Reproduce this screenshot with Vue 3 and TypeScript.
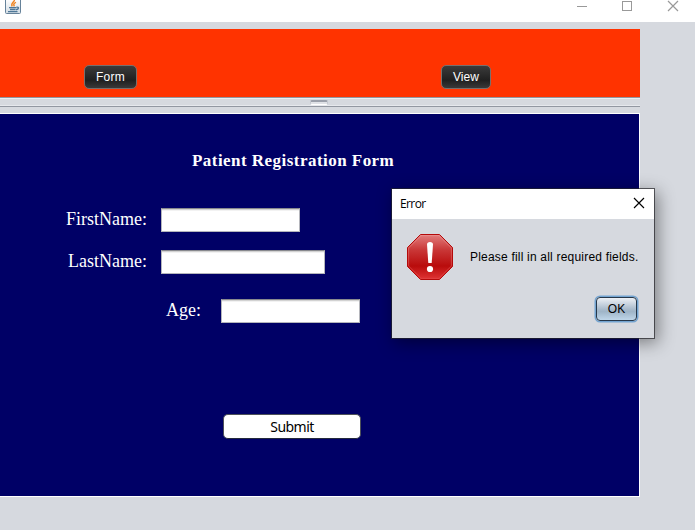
<script setup lang="ts">
import { ref } from 'vue'

interface Field {
  key: string
  label: string
}

const fields: Field[] = [
  { key: 'first', label: 'FirstName:' },
  { key: 'last', label: 'LastName:' },
  { key: 'age', label: 'Age:' },
]
const values = ref<Record<string, string>>({ first: '', last: '', age: '' })
const errorOpen = ref(true)

function submit() {
  errorOpen.value = fields.some((f) => !values.value[f.key])
}
</script>

<template>
  <div class="window">
    <header class="titlebar">
      <svg class="java" width="16" height="16" viewBox="0 0 16 16">
        <defs>
          <linearGradient id="javaBg" x1="0" y1="0" x2="0" y2="1">
            <stop offset="0" stop-color="#ffffff" />
            <stop offset="1" stop-color="#d3dde5" />
          </linearGradient>
        </defs>
        <path d="M0.5 0v13.5q0 1 1 1h13q1 0 1-1V0z" fill="url(#javaBg)" />
        <path d="M0.5 0v13.5q0 1 1 1h13q1 0 1-1V0" fill="none" stroke="#66829a" />
        <path d="M9.3 1C10 2.8 5.2 3.8 7.2 7.3M11 3.4C8.4 4.4 8.4 5.6 9.4 7.4" fill="none" stroke="#ee8524" stroke-width="1.5" />
        <path d="M4 8.6h7.2M5 10.5h5.6M3 12.6h9.5M11.4 8.2c3-.4 2.6 2-.4 2.5" fill="none" stroke="#4f7898" stroke-width="1.4" />
      </svg>
      <svg class="controls" width="104" height="14" viewBox="0 0 104 14" fill="none" stroke="#999">
        <path d="M0 6.5h10" />
        <rect x="45.5" y="1.5" width="9" height="9" />
        <path d="M91 1l10 10M101 1l-10 10" stroke-width="1.2" />
      </svg>
    </header>

    <main class="split">
      <nav class="top">
        <button class="dark form-btn">Form</button>
        <button class="dark view-btn">View</button>
      </nav>
      <div class="divider"><i class="grip"></i></div>
      <section class="panel">
        <h1>Patient Registration Form</h1>
        <form @submit.prevent="submit">
          <div v-for="f in fields" :key="f.key" class="row" :class="f.key">
            <label :for="f.key">{{ f.label }}</label>
            <input :id="f.key" v-model="values[f.key]" type="text" autocomplete="off" />
          </div>
          <button class="submit" type="submit">Submit</button>
        </form>
      </section>
    </main>

    <div v-if="errorOpen" class="dialog" role="alertdialog">
      <div class="dialog-title">
        <span>Error</span>
        <svg width="12" height="12" viewBox="0 0 12 12" fill="none" stroke="#000" stroke-width="1.15" @click="errorOpen = false">
          <path d="M1 1l10 10M11 1L1 11" />
        </svg>
      </div>
      <div class="dialog-body">
        <svg class="stop" width="48" height="48" viewBox="0 0 48 48">
          <defs>
            <linearGradient id="stopBg" x1="0" y1="0" x2="0" y2="1">
              <stop offset="0" stop-color="#e27c7c" />
              <stop offset="0.35" stop-color="#c93636" />
              <stop offset="0.7" stop-color="#b90c0c" />
              <stop offset="1" stop-color="#e03434" />
            </linearGradient>
            <linearGradient id="stopEdge" x1="0" y1="0" x2="0" y2="1">
              <stop offset="0" stop-color="#eea0a0" />
              <stop offset="1" stop-color="#e45050" />
            </linearGradient>
          </defs>
          <path d="M14.5 1.5h19l13 13v19l-13 13h-19l-13-13v-19z" fill="url(#stopBg)" stroke="#b40a0a" />
          <path d="M15 2.6h18l12.4 12.4v18L33 45.4H15L2.6 33V15z" fill="none" stroke="url(#stopEdge)" stroke-opacity="0.5" />
          <path d="M21 11.5Q21 9 24 9t3 2.5L25.7 30h-3.4z" fill="#fff" />
          <circle cx="24" cy="36" r="3.1" fill="#fff" />
        </svg>
        <p>Please fill in all required fields.</p>
      </div>
      <div class="dialog-actions">
        <button class="ok" @click="errorOpen = false">OK</button>
      </div>
    </div>
  </div>
</template>

<style>
body {
  margin: 0;
  overflow: hidden;
}
</style>

<style scoped>
.window {
  position: relative;
  width: 695px;
  height: 530px;
  overflow: hidden;
  background: #d6d9df;
  font-family: "Liberation Sans", Arial, sans-serif;
}
.window * {
  box-sizing: border-box;
}
button {
  margin: 0;
  padding: 0;
  font-family: inherit;
}
.titlebar {
  display: flex;
  justify-content: space-between;
  height: 22px;
  padding: 0 14px 0 5px;
  background: #fff;
}
.java {
  margin-top: -1px;
}
.split {
  width: 640px;
  padding-top: 7px;
}
.top {
  display: flex;
  height: 68px;
  padding: 36px 0 0 84px;
  background: #ff3300;
}
.dark {
  height: 24px;
  border: 1px solid #77706e;
  border-radius: 5px;
  background: linear-gradient(#3b3b3b, #202020 65%, #393939);
  color: #fff;
  font-size: 12px;
  line-height: 23px;
}
.form-btn {
  width: 53px;
  letter-spacing: 0.3px;
}
.view-btn {
  width: 50px;
  margin-left: 304px;
  letter-spacing: 0.1px;
}
.divider {
  height: 10px;
  padding: 2px 0 0 310px;
  border-top: 1px solid #9297a1;
  border-bottom: 1px solid #9297a1;
  box-shadow: inset 0 1px #eceef2, inset 0 -1px #e6e8ed;
}
.grip {
  display: block;
  width: 18px;
  height: 5px;
  border: 1px solid #c3c7cf;
  border-top: 2px solid #9ba0ab;
  border-bottom: 1px solid #fff;
  border-radius: 2px;
  background: #e0e2e7;
}
.panel {
  height: 384px;
  margin-top: 6px;
  padding-top: 37px;
  border: solid #fff;
  border-width: 1px 1px 1px 0;
  background: #000066;
  color: #fff;
  font-family: "Liberation Serif", "Times New Roman", serif;
}
h1 {
  height: 20px;
  margin: 0 0 0 192px;
  font-size: 17px;
  line-height: 20px;
  letter-spacing: 0.46px;
  white-space: nowrap;
}
.row {
  display: flex;
  height: 24px;
}
.row label {
  width: 147px;
  font-size: 18px;
  line-height: 22px;
  text-align: right;
  white-space: nowrap;
}
.row input {
  width: 139px;
  height: 24px;
  margin: 0 0 0 14px;
  padding: 2px 6px;
  border: 1px solid #b4b5bb;
  border-top-color: #88898e;
  border-radius: 0;
  outline: 0;
  background: #fff;
  box-shadow: inset 0 1px #d2d2d2, inset 0 2px #f2f2f2;
}
.first {
  margin-top: 37px;
}
.last {
  margin-top: 18px;
}
.row.last input {
  width: 164px;
}
.age {
  margin-top: 25px;
}
.age label {
  width: 201px;
}
.row.age input {
  margin-left: 20px;
}
.submit {
  display: block;
  width: 138px;
  height: 25px;
  margin: 91px 0 0 223px;
  padding-top: 1px;
  border: 1px solid #4c5058;
  border-bottom-color: #242a3c;
  border-radius: 5px;
  background: #fff;
  color: #000;
  font-family: "Noto Sans", "Open Sans", sans-serif;
  font-size: 14px;
  line-height: 22px;
  letter-spacing: -0.55px;
}
.dialog {
  position: absolute;
  left: 391px;
  top: 188px;
  width: 264px;
  height: 151px;
  border: 1px solid rgba(35, 35, 40, 0.7);
  background: #d6d9df;
  background-clip: padding-box;
  box-shadow: 3px 4px 16px rgba(0, 0, 0, 0.42);
  color: #000;
}
.dialog-title {
  display: flex;
  justify-content: space-between;
  height: 30px;
  padding: 8px 9px 0 8px;
  background: #fff;
  font-family: "Open Sans", "Noto Sans", sans-serif;
  font-size: 12px;
  line-height: 14px;
  letter-spacing: -0.6px;
}
.dialog-body {
  display: flex;
  padding: 14px 0 0 14px;
}
.dialog-body p {
  margin: 16px 0 0 16px;
  font-size: 12px;
  line-height: 16px;
  letter-spacing: 0.2px;
  white-space: nowrap;
}
.dialog-actions {
  display: flex;
  justify-content: flex-end;
  padding: 16px 17px 0 0;
}
.ok {
  width: 41px;
  height: 24px;
  border: 1px solid #26384b;
  border-radius: 4px;
  background: linear-gradient(#edf0f5, #a8bacb 52%, #9fb5c8 62%, #bfd6e9);
  box-shadow: 0 0 0 1.5px #73a4d1;
  color: #000;
  font-size: 12px;
  line-height: 23px;
}
</style>
